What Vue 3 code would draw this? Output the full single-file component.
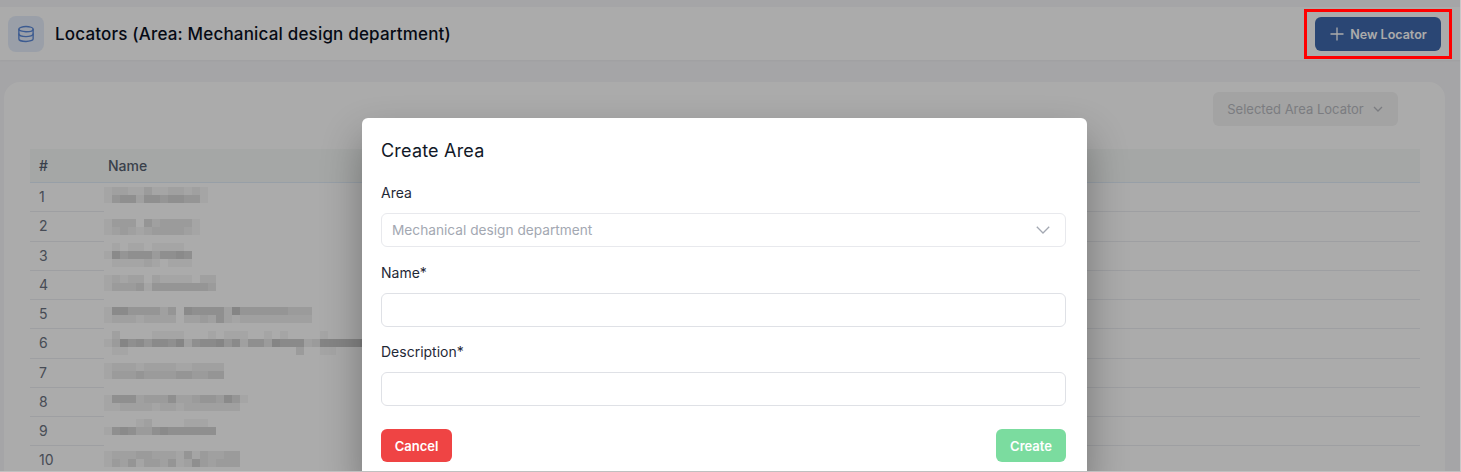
<script setup>
const numbers = [1, 2, 3, 4, 5, 6, 7, 8, 9, 10]

// Darkness of the redaction mosaic, one digit per 8px cell, one string per 8px line.
const mosaic = [
  '1221131122121',
  '1455255455441',
  '', '',
  '133304233331',
  '123212333321',
  '',
  '010110111100',
  '16455535565',
  '01111210111',
  '',
  '12122021111022',
  '13334144444443',
  '', '',
  '16644442406555527444444333',
  '12221222202232521222222222',
  '',
  '020000111100010111001010000100',
  '137564665725667462553766623777778',
  '011000000000000000000000300110',
  '',
  '122212222112222',
  '133343333443344',
  '', '',
  '155523335223443641',
  '11222212212222222',
  '',
  '0000120000111000',
  '15653356555555',
  '', '',
  '12223322214132233',
  '13241332412532333',
]

const cells = mosaic.map((line) => line.split('').map(Number))
</script>

<template>
  <div class="page">
    <header class="topbar">
      <div class="topbar-title">
        <span class="icon-box">
          <svg width="18" height="18" viewBox="0 0 24 24" fill="none" stroke="currentColor" stroke-width="1.8" stroke-linecap="round" stroke-linejoin="round">
            <ellipse cx="12" cy="5.5" rx="9.5" ry="3.5" />
            <path d="M2.5 5.5v13c0 1.9 4.3 3.5 9.5 3.5s9.5-1.6 9.5-3.5v-13" />
            <path d="M2.5 12c0 1.9 4.3 3.5 9.5 3.5s9.5-1.6 9.5-3.5" />
          </svg>
        </span>
        <h1>Locators (Area: Mechanical design department)</h1>
      </div>
      <button class="new-btn" type="button">
        <svg width="16" height="16" viewBox="0 0 16 16" fill="none" stroke="currentColor" stroke-width="1.3">
          <path d="M8 1.5v13M1.5 8h13" />
        </svg>
        New Locator
      </button>
    </header>

    <main class="card">
      <div class="toolbar">
        <div class="area-select">
          <span>Selected Area Locator</span>
          <svg width="12" height="12" viewBox="0 0 12 12" fill="none" stroke="currentColor" stroke-width="1.3">
            <path d="M2 4l4 4 4-4" />
          </svg>
        </div>
      </div>

      <div class="table">
        <div class="row head">
          <span class="num">#</span>
          <span>Name</span>
        </div>
        <div v-for="n in numbers" :key="n" class="row">
          <span class="num">{{ n }}</span>
        </div>
        <div class="mosaic">
          <div v-for="(line, y) in cells" :key="y" class="mosaic-line">
            <i v-for="(v, x) in line" :key="x" class="cell" :style="{ opacity: v * 0.032 }"></i>
          </div>
        </div>
      </div>
    </main>

    <div class="backdrop"></div>

    <section class="modal">
      <h2>Create Area</h2>
      <label class="label">Area</label>
      <div class="control select">
        <span>Mechanical design department</span>
        <svg width="16" height="16" viewBox="0 0 16 16" fill="none" stroke="currentColor" stroke-width="1.3">
          <path d="M1.8 4.8L8 11l6.2-6.2" />
        </svg>
      </div>
      <label class="label">Name*</label>
      <div class="control"></div>
      <label class="label">Description*</label>
      <div class="control"></div>
      <div class="actions">
        <button class="btn cancel" type="button">Cancel</button>
        <button class="btn create" type="button">Create</button>
      </div>
    </section>

    <div class="annotation"></div>
    <div class="frame"></div>
  </div>
</template>

<style>
html, body {
  margin: 0;
  overflow: hidden;
}
</style>

<style scoped>
.page {
  position: relative;
  width: 1461px;
  height: 472px;
  overflow: hidden;
  padding-top: 7px;
  box-sizing: border-box;
  background: #f6f6f9;
  font-family: Inter, "Liberation Sans", sans-serif;
  color: #111827;
}
.topbar {
  height: 53px;
  background: #fff;
  display: flex;
  align-items: center;
  justify-content: space-between;
  padding: 0 20px 0 8px;
  box-shadow: 0 1px 2px rgba(0, 0, 0, 0.04);
}
.topbar-title {
  display: flex;
  align-items: center;
  gap: 11px;
}
.icon-box {
  width: 36px;
  height: 36px;
  border-radius: 8px;
  background: #e6eefb;
  color: #5a88d8;
  display: flex;
  align-items: center;
  justify-content: center;
}
h1 {
  margin: 0;
  font-size: 17px;
  font-weight: 450;
  letter-spacing: 0.18px;
  color: #0a0f1e;
}
.new-btn {
  width: 126px;
  height: 34px;
  border: 0;
  border-radius: 6px;
  background: #3f69ad;
  color: #fff;
  display: flex;
  align-items: center;
  justify-content: center;
  gap: 5px;
  font: 600 12.5px Inter, "Liberation Sans", sans-serif;
  padding: 1px 0 0;
}
.card {
  margin: 22px 16px 0 4px;
  height: 400px;
  background: #fff;
  border-radius: 16px 16px 0 0;
  padding: 10px 25px 0 26px;
}
.toolbar {
  display: flex;
  justify-content: flex-end;
  padding-right: 22px;
  height: 57px;
}
.area-select {
  width: 185px;
  height: 34px;
  border-radius: 6px;
  background: #f3f3f3;
  color: #b8bac0;
  font-size: 13px;
  display: flex;
  align-items: center;
  justify-content: center;
  gap: 8px;
}
.table {
  position: relative;
}
.row {
  height: 29.25px;
  box-sizing: border-box;
  border-bottom: 1px solid #eceef2;
  padding-bottom: 1px;
  display: flex;
  align-items: center;
  font-size: 14px;
  color: #6b7280;
}
.row.head {
  height: 34px;
  background: #f7faf8;
  border-bottom-color: #e2eef9;
  font-weight: 500;
  color: #566070;
}
.num {
  width: 78px;
  padding-left: 9px;
  box-sizing: border-box;
}
.mosaic {
  position: absolute;
  left: 74px;
  top: 34px;
  width: 264px;
  bottom: 0;
  padding-top: 4px;
  background: #fff;
}
.mosaic-line {
  display: flex;
  height: 8px;
}
.cell {
  width: 8px;
  height: 8px;
  background: #000;
}
.backdrop {
  position: absolute;
  inset: 0;
  background: rgba(0, 0, 0, 0.33);
}
.modal {
  position: absolute;
  left: 362px;
  top: 118px;
  width: 725px;
  height: 360px;
  box-sizing: border-box;
  padding: 19px 21px 0 19px;
  background: #fff;
  border-radius: 6px;
  box-shadow: 0 20px 40px rgba(0, 0, 0, 0.32);
}
h2 {
  margin: 0 0 18px;
  font-size: 18px;
  line-height: 28px;
  font-weight: 400;
  letter-spacing: 0.2px;
  color: #111827;
}
.label {
  display: block;
  font-size: 14px;
  line-height: 20px;
  margin-bottom: 10px;
  font-weight: 400;
  color: #1f2937;
}
.control {
  height: 34px;
  box-sizing: border-box;
  border: 1px solid #dfe1e6;
  border-radius: 6px;
  margin-bottom: 15.5px;
  background: #fff;
}
.select {
  display: flex;
  align-items: center;
  justify-content: space-between;
  padding: 0 14px 0 10px;
  border-color: #e8e9ed;
  font-size: 13.7px;
  color: #a3a8b2;
}
.actions {
  display: flex;
  justify-content: space-between;
  margin-top: 23px;
}
.btn {
  height: 33px;
  border: 0;
  border-radius: 6px;
  color: #fff;
  font: 600 13px Inter, "Liberation Sans", sans-serif;
  padding: 0;
}
.cancel {
  width: 71px;
  background: #ef4444;
}
.create {
  width: 70px;
  background: #7bdc9f;
}
.annotation {
  position: absolute;
  left: 1304px;
  top: 9px;
  width: 148px;
  height: 50px;
  box-sizing: border-box;
  border: 3px solid #ff0000;
}
.frame {
  position: absolute;
  inset: 0;
  border-right: 1px solid #c8c8c8;
  border-bottom: 1px solid #c0c0c0;
}
</style>
